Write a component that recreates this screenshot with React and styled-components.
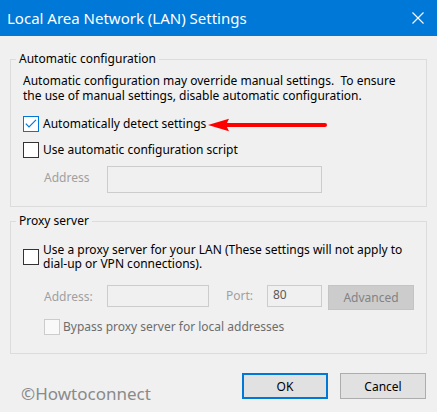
import React from "react"
import styled, { createGlobalStyle } from "styled-components"

const GlobalStyle = createGlobalStyle`
  html, body {
    margin: 0;
    padding: 0;
    background: #f0f0f0;
  }
  body {
    font-family: "Noto Sans", "Open Sans", sans-serif;
    font-size: 12px;
    color: #000;
  }
`

const Checkbox = ({ checked, disabled }) => (
  <Box $checked={checked} $disabled={disabled}>
    {checked && (
      <svg width="14" height="14" viewBox="0 0 14 14">
        <polyline points="1.8,6.6 5,9.8 12,2.8" fill="none" stroke="#0078d7" strokeWidth="1.2" />
      </svg>
    )}
  </Box>
)

const Arrow = () => (
  <ArrowSvg width="120" height="14" viewBox="0 0 120 14">
    <line x1="18" y1="7" x2="117" y2="7" stroke="#f00" strokeWidth="4" strokeLinecap="round" />
    <polygon points="0,7 21,0.8 18,7 21,13.2" fill="#f00" />
  </ArrowSvg>
)

const App = () => {
  return (
    <Window>
      <GlobalStyle />
      <TitleBar>
        <Title>Local Area Network (LAN) Settings</Title>
        <CloseButton aria-label="Close">
          <svg width="12" height="12" viewBox="0 0 12 12">
            <path d="M0.5 0.5 L11.5 11.5 M11.5 0.5 L0.5 11.5" stroke="#fff" strokeWidth="1.1" />
          </svg>
        </CloseButton>
      </TitleBar>

      <Body>
        <Group $top={15} $pt={6} $pb={13}>
          <Legend>Automatic configuration</Legend>
          <Description>
            Automatic configuration may override manual settings.&nbsp; To ensure
            <br />
            the use of manual settings, disable automatic configuration.
          </Description>
          <CheckRow $top={13}>
            <Checkbox checked />
            <Label>Automatically detect settings</Label>
            <Arrow />
          </CheckRow>
          <CheckRow $top={10}>
            <Checkbox />
            <Label>Use automatic configuration script</Label>
          </CheckRow>
          <FieldRow $top={8}>
            <FieldLabel $width={63}>Address</FieldLabel>
            <Input $width={215} $height={27} />
          </FieldRow>
        </Group>

        <Group $top={6} $pt={0} $pb={18}>
          <Legend>Proxy server</Legend>
          <CheckRow $top={14}>
            <Checkbox />
            <Label $lines>
              Use a proxy server for your LAN (These settings will not apply to
              <br />
              dial-up or VPN connections).
            </Label>
          </CheckRow>
          <FieldRow $top={14}>
            <FieldLabel $width={63}>Address:</FieldLabel>
            <Input $width={102} $height={22} />
            <FieldLabel $width={41} $gap={17}>Port:</FieldLabel>
            <Input $width={55} $height={22}>80</Input>
            <DisabledButton>Advanced</DisabledButton>
          </FieldRow>
          <CheckRow $top={9} $indent={21} $gap={3}>
            <Checkbox disabled />
            <Label $disabled>Bypass proxy server for local addresses</Label>
          </CheckRow>
        </Group>

        <Footer>
          <Watermark>©Howtoconnect</Watermark>
          <Button $primary>OK</Button>
          <Button>Cancel</Button>
        </Footer>
      </Body>
    </Window>
  )
}

export default App

const Window = styled.div`
  width: 437px;
  height: 412px;
  background: #f0f0f0;
  overflow: hidden;
`

const TitleBar = styled.div`
  height: 36px;
  background: #0078d7;
  display: flex;
  align-items: center;
  padding-left: 7px;
`

const Title = styled.div`
  flex: 1;
  color: #fff;
  font-size: 15px;
  line-height: 20px;
`

const CloseButton = styled.button`
  width: 38px;
  height: 36px;
  border: none;
  background: none;
  padding: 0;
  display: flex;
  align-items: center;
  justify-content: center;
`

const Body = styled.div`
  padding: 0 10px;
`

const Group = styled.fieldset`
  margin: ${(p) => p.$top}px 0 0;
  padding: ${(p) => p.$pt}px 12px ${(p) => p.$pb}px 12px;
  border: 1px solid #dcdcdc;
  min-width: 0;
`

const Legend = styled.legend`
  margin-left: -7px;
  padding: 0 3px;
  font-size: 12px;
  line-height: 16px;
`

const Description = styled.div`
  line-height: 15px;
  white-space: nowrap;
`

const CheckRow = styled.div`
  display: flex;
  align-items: center;
  gap: ${(p) => p.$gap ?? 4}px;
  margin-top: ${(p) => p.$top}px;
  padding-left: ${(p) => p.$indent ?? 0}px;
`

const Box = styled.span`
  box-sizing: border-box;
  flex: none;
  width: 16px;
  height: 16px;
  display: flex;
  align-items: center;
  justify-content: center;
  background: ${(p) => (p.$disabled ? "#f9f9f9" : "#fff")};
  border: 1px solid
    ${(p) => (p.$checked ? "#0078d7" : p.$disabled ? "#cccccc" : "#333333")};
`

const Label = styled.span`
  line-height: ${(p) => (p.$lines ? 14 : 16)}px;
  white-space: nowrap;
  color: ${(p) => (p.$disabled ? "#6d6d6d" : "#000")};
`

const ArrowSvg = styled.svg`
  flex: none;
  margin: 2px 0 0 -2px;
`

const FieldRow = styled.div`
  display: flex;
  align-items: flex-start;
  margin-top: ${(p) => p.$top}px;
  padding-left: 21px;
`

const FieldLabel = styled.span`
  width: ${(p) => p.$width}px;
  margin-left: ${(p) => p.$gap ?? 0}px;
  color: #a0a0a0;
  line-height: ${(p) => (p.$gap ? 22 : 24)}px;
  flex: none;
`

const Input = styled.div`
  box-sizing: border-box;
  width: ${(p) => p.$width}px;
  height: ${(p) => p.$height}px;
  border: 1px solid #cccccc;
  background: #f0f0f0;
  padding-left: 5px;
  line-height: 18px;
  color: #5a5a5a;
  flex: none;
`

const DisabledButton = styled.div`
  box-sizing: border-box;
  width: 86px;
  height: 25px;
  margin-left: 6px;
  background: #cccccc;
  border: 1px solid #c4c4c4;
  color: #838383;
  display: flex;
  align-items: center;
  justify-content: center;
`

const Footer = styled.div`
  display: flex;
  align-items: flex-start;
  margin-top: 19px;
  padding-right: 1px;
`

const Watermark = styled.div`
  flex: 1;
  margin-top: 11px;
  padding-left: 11px;
  font-size: 17px;
  line-height: 20px;
  color: #8a8a8a;
`

const Button = styled.button`
  box-sizing: border-box;
  width: 86px;
  height: 26px;
  margin-left: ${(p) => (p.$primary ? 0 : 12)}px;
  background: #e1e1e1;
  border: ${(p) => (p.$primary ? "2px solid #0078d7" : "1px solid #adadad")};
  font-family: inherit;
  font-size: 12px;
  color: #000;
  padding: 0;
`
